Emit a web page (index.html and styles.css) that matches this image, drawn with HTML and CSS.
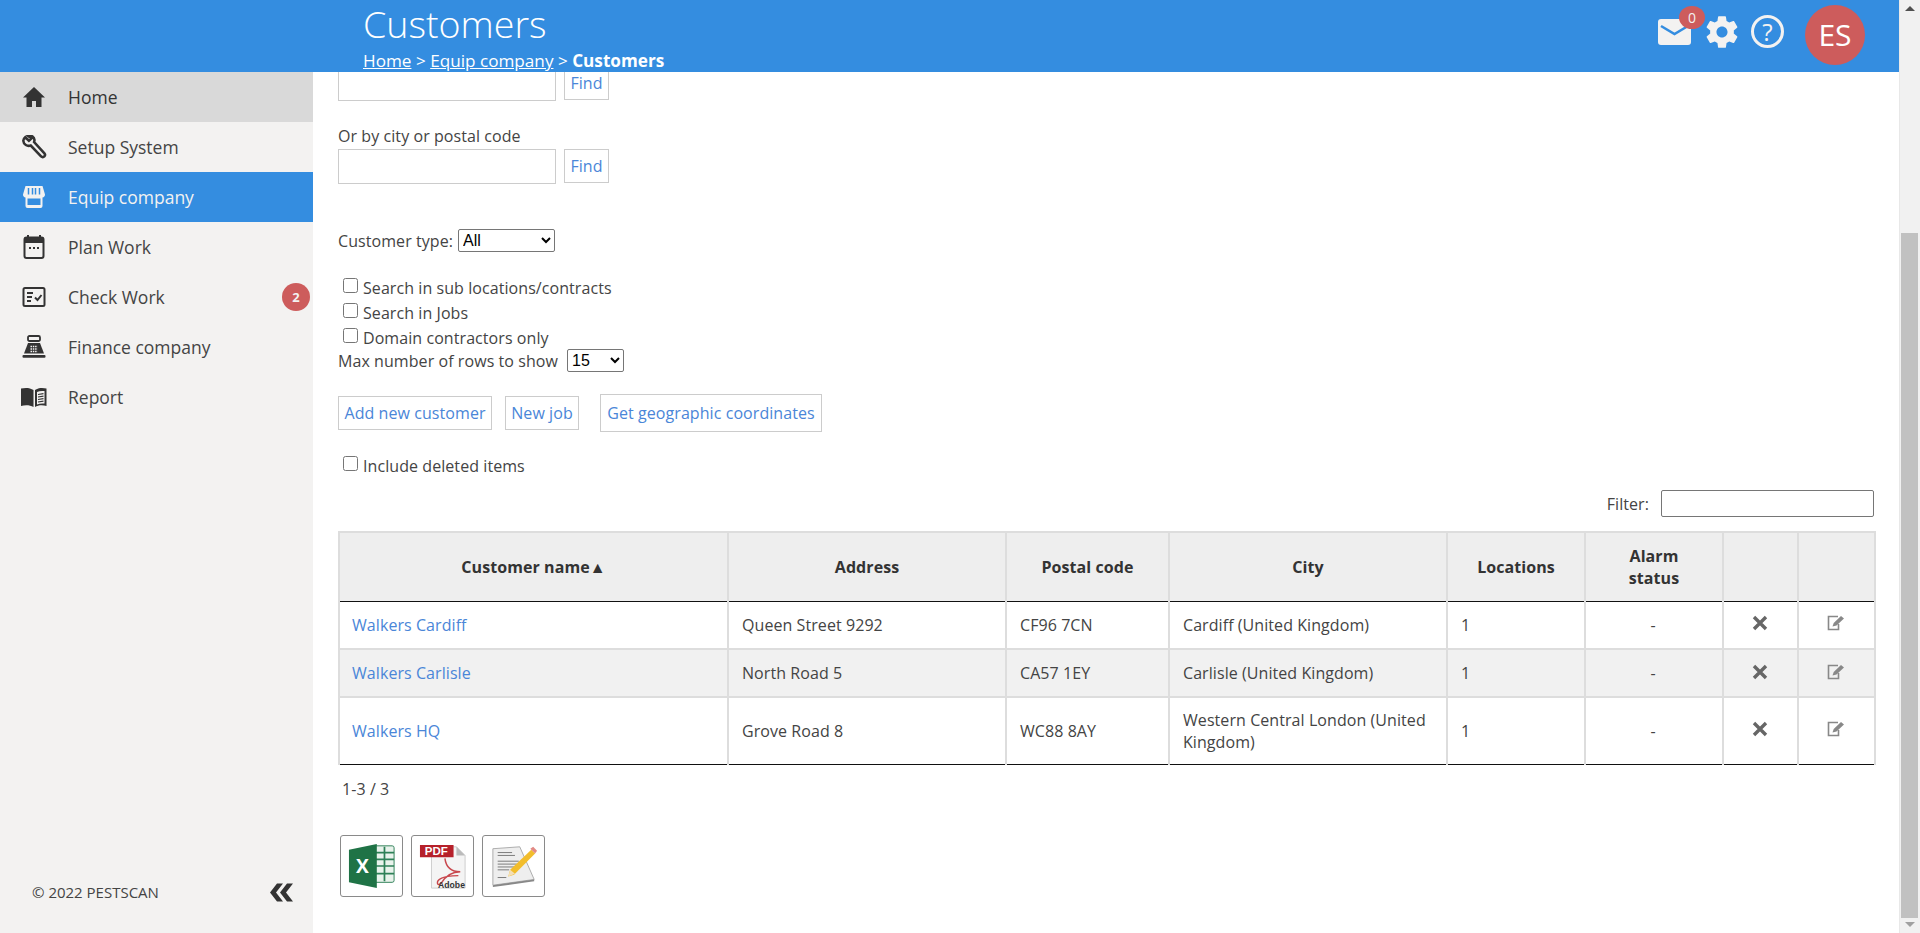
FILE: index.html
```html
<!DOCTYPE html>
<html lang="en">
<head>
<meta charset="utf-8">
<title>Customers</title>
<link rel="stylesheet" href="styles.css">
</head>
<body>
<div class="app">
  <header class="topbar">
    <div class="heading">
      <h1 class="title">Customers</h1>
      <div class="crumbs"><a href="#">Home</a> &gt; <a href="#">Equip company</a> &gt; <b>Customers</b></div>
    </div>
    <div class="tools">
      <span class="mail">
        <svg class="mail-icon" viewBox="0 0 33 26"><rect width="33" height="26" rx="3" fill="#f3f2f1"/><path d="M3 7l13.500 8L30 7" fill="none" stroke="#348de0" stroke-width="2.600"/></svg>
        <span class="mail-badge">0</span>
      </span>
      <svg class="gear" viewBox="0 0 24 24"><path fill="#f3f2f1" d="M19.430 12.980c.04-.32.07-.64.070-.98s-.030-.66-.070-.98l2.110-1.650c.19-.15.24-.42.120-.64l-2-3.460c-.12-.22-.39-.30-.61-.22l-2.490 1c-.52-.40-1.080-.73-1.690-.98l-.38-2.650C14.460 2.180 14.250 2 14 2h-4c-.25 0-.46.180-.49.420l-.38 2.650c-.61.250-1.170.590-1.690.98l-2.490-1c-.23-.09-.49 0-.61.220l-2 3.460c-.13.220-.07.490.12.640l2.110 1.650c-.04.320-.07.650-.07.980s.03.660.07.980l-2.110 1.650c-.19.150-.24.420-.12.640l2 3.460c.12.220.39.300.61.220l2.490-1c.52.400 1.080.730 1.690.980l.38 2.650c.03.240.24.420.49.420h4c.25 0 .46-.18.490-.42l.38-2.650c.61-.25 1.170-.59 1.690-.98l2.490 1c.23.090.49 0 .61-.22l2-3.460c.12-.22.07-.49-.12-.64l-2.110-1.650zM12 15.500c-1.930 0-3.500-1.570-3.500-3.500s1.570-3.500 3.500-3.500 3.500 1.570 3.500 3.500-1.570 3.500-3.500 3.500z"/></svg>
      <span class="help">?</span>
      <span class="avatar">ES</span>
    </div>
  </header>

  <div class="body">
    <aside class="sidebar">
      <nav class="menu">
        <a class="item item-hover" href="#">
          <svg class="ico" viewBox="0 0 24 24"><path d="M12 2L1 12.500h3.500V22h5.500v-6h4v6h5.500v-9.500H23z" fill="#333"/></svg>
          <span>Home</span>
        </a>
        <a class="item" href="#">
          <svg class="ico ico-wide" viewBox="0 0 26 26"><path d="M3.500 2.500l4 3.700 2.800-2.500-3.600-2.700c3.300-1.100 6.500.9 6.800 4.400 0 .9-.1 1.500-.4 2.200L24.300 20c.9 1 .8 2.200-.1 3.200-1 1-2.400 1.100-3.300.1L9.500 11.400C5.700 12.800 1.700 10.200 1.400 6.200c0-1.400.7-2.600 2.100-3.700z" fill="none" stroke="#333" stroke-width="2.800"/></svg>
          <span>Setup System</span>
        </a>
        <a class="item item-active" href="#">
          <svg class="ico" viewBox="0 0 24 24"><path d="M3.500 1h17l2.500 8.500c0 1.700-1 2.800-2.500 3V21a2 2 0 0 1-2 2h-13a2 2 0 0 1-2-2v-8.500C2 12.300 1 11.200 1 9.500z" fill="#f3f2f1"/><path d="M6.500 3v6.500M10.500 3v6.500M13.500 3v6.500M17.500 3v6.500" stroke="#348de0" stroke-width="1.500"/><rect x="5.500" y="13.500" width="13" height="6.500" fill="#348de0"/></svg>
          <span>Equip company</span>
        </a>
        <a class="item" href="#">
          <svg class="ico" viewBox="0 0 24 24"><path d="M6 0v3M18 0v3" stroke="#333" stroke-width="2"/><rect x="2.500" y="2.500" width="19" height="20.500" rx="2" fill="none" stroke="#333" stroke-width="2"/><rect x="2.500" y="2.500" width="19" height="5.500" fill="#333"/><path d="M7 13h2M11 13h2M15 13h2" stroke="#333" stroke-width="2"/></svg>
          <span>Plan Work</span>
        </a>
        <a class="item" href="#">
          <svg class="ico" viewBox="0 0 24 24"><rect x="1.500" y="3" width="21" height="18" rx="1.500" fill="none" stroke="#333" stroke-width="2"/><path d="M5 8h6M5 12h5M5 16h4" stroke="#333" stroke-width="2"/><path d="M13 12.500l2.500 2.500 4-5" fill="none" stroke="#333" stroke-width="2"/></svg>
          <span>Check Work</span>
          <span class="count">2</span>
        </a>
        <a class="item" href="#">
          <svg class="ico" viewBox="0 0 24 24"><rect x="6" y="1" width="12" height="5" rx="1.500" fill="none" stroke="#333" stroke-width="1.800"/><path d="M6 8h12l4 10.500H2z" fill="#333"/><rect x="0.500" y="20" width="23" height="2.800" rx="1" fill="#333"/><path d="M8.500 11.500h7M8.500 14h7M8.500 16.500h7" stroke="#f3f2f1" stroke-width="1.300" stroke-dasharray="1.500 .8"/></svg>
          <span>Finance company</span>
        </a>
        <a class="item" href="#">
          <svg class="ico ico-wide" viewBox="0 0 26 24"><path d="M0 3.500c4-1 9-1 12.500 1.500v17C9 20 4 20 0 21z" fill="#333"/><path d="M14 5c3-2.500 8-2.500 11.500-1.500v17.500c-3.500-1-8.500-1-11.500 1z" fill="#333"/><path d="M16 7c2-1 4.500-1.300 7.500-1v12.500c-3-.3-5.500 0-7.500 1z" fill="#f3f2f1"/><path d="M17 9.500l5.500-.8M17 12l5.500-.8M17 14.500l5.500-.8M17 17l5.500-.8" stroke="#333" stroke-width="1.200"/></svg>
          <span>Report</span>
        </a>
      </nav>
      <div class="side-foot">
        <span>© 2022 PESTSCAN</span>
        <svg class="collapse" viewBox="0 0 24 20"><path d="M8 1L1 10l7 9h6l-7-9 7-9zM18 1l-7 9 7 9h6l-7-9 7-9z" fill="#333"/></svg>
      </div>
    </aside>

    <main class="main">
      <div class="search-row search-clipped">
        <input class="text" type="text"><a class="btn btn-find" href="#">Find</a>
      </div>
      <label class="field-label">Or by city or postal code</label>
      <div class="search-row">
        <input class="text" type="text"><a class="btn btn-find" href="#">Find</a>
      </div>
      <div class="type-row">
        <span>Customer type:</span>
        <select class="sel sel-type"><option>All</option></select>
      </div>
      <div class="checks">
        <label class="check"><input type="checkbox"><span>Search in sub locations/contracts</span></label>
        <label class="check"><input type="checkbox"><span>Search in Jobs</span></label>
        <label class="check"><input type="checkbox"><span>Domain contractors only</span></label>
      </div>
      <div class="rows-row">
        <span>Max number of rows to show</span>
        <select class="sel sel-rows"><option>15</option></select>
      </div>
      <div class="actions">
        <a class="btn btn-add" href="#">Add new customer</a>
        <a class="btn btn-job" href="#">New job</a>
        <a class="btn btn-geo" href="#">Get geographic coordinates</a>
      </div>
      <label class="check check-deleted"><input type="checkbox"><span>Include deleted items</span></label>
      <div class="filter">
        <span>Filter:</span>
        <input class="filter-input" type="text">
      </div>
      <table class="grid">
        <colgroup>
          <col class="c1"><col class="c2"><col class="c3"><col class="c4"><col class="c5"><col class="c6"><col class="c7"><col class="c8">
        </colgroup>
        <thead>
          <tr>
            <th>Customer name▲</th>
            <th>Address</th>
            <th>Postal code</th>
            <th>City</th>
            <th>Locations</th>
            <th>Alarm<br>status</th>
            <th></th>
            <th></th>
          </tr>
        </thead>
        <tbody>
          <tr class="r-a">
            <td><a href="#">Walkers Cardiff</a></td>
            <td>Queen Street 9292</td>
            <td>CF96 7CN</td>
            <td>Cardiff (United Kingdom)</td>
            <td>1</td>
            <td class="mid">-</td>
            <td class="mid"><svg class="x" viewBox="0 0 16 16"><path d="M2 2l12 12M14 2L2 14" stroke="#666" stroke-width="3.400"/></svg></td>
            <td class="mid"><svg class="ed" viewBox="0 0 18 16"><path d="M11 1.500H1.500v13h10V9" fill="none" stroke="#888" stroke-width="1.600"/><path d="M5.500 11.500l1.200-3.500L14 1l3 2.500-7.500 7z" fill="#888"/></svg></td>
          </tr>
          <tr class="r-b">
            <td><a href="#">Walkers Carlisle</a></td>
            <td>North Road 5</td>
            <td>CA57 1EY</td>
            <td>Carlisle (United Kingdom)</td>
            <td>1</td>
            <td class="mid">-</td>
            <td class="mid"><svg class="x" viewBox="0 0 16 16"><path d="M2 2l12 12M14 2L2 14" stroke="#666" stroke-width="3.400"/></svg></td>
            <td class="mid"><svg class="ed" viewBox="0 0 18 16"><path d="M11 1.500H1.500v13h10V9" fill="none" stroke="#888" stroke-width="1.600"/><path d="M5.500 11.500l1.200-3.500L14 1l3 2.500-7.500 7z" fill="#888"/></svg></td>
          </tr>
          <tr class="r-c">
            <td><a href="#">Walkers HQ</a></td>
            <td>Grove Road 8</td>
            <td>WC88 8AY</td>
            <td>Western Central London (United Kingdom)</td>
            <td>1</td>
            <td class="mid">-</td>
            <td class="mid"><svg class="x" viewBox="0 0 16 16"><path d="M2 2l12 12M14 2L2 14" stroke="#666" stroke-width="3.400"/></svg></td>
            <td class="mid"><svg class="ed" viewBox="0 0 18 16"><path d="M11 1.500H1.500v13h10V9" fill="none" stroke="#888" stroke-width="1.600"/><path d="M5.500 11.500l1.200-3.500L14 1l3 2.500-7.500 7z" fill="#888"/></svg></td>
          </tr>
        </tbody>
      </table>
      <div class="pager">1-3 / 3</div>
      <div class="exports">
        <a class="export" href="#">
          <svg viewBox="0 0 50 48" class="export-ico">
            <path d="M28 3h18a2 2 0 0 1 2 2v34a2 2 0 0 1-2 2H28z" fill="#e9f3ec" stroke="#2e8057" stroke-width="1"/>
            <path d="M28 10h20M28 17h20M28 24h20M28 32h20M38 4v36" stroke="#2e8057" stroke-width="1.800"/>
            <path d="M1 7L30 1v46L1 41z" fill="#1f7346"/>
            <text x="15" y="31" class="xl-text">X</text>
          </svg>
        </a>
        <a class="export" href="#">
          <svg viewBox="0 0 50 50" class="export-ico">
            <path d="M13 5h26l9 9v34H13z" fill="#f4f4f4" stroke="#ccc"/>
            <path d="M39 5v9h9z" fill="#bbb"/>
            <path d="M1 3h35v13H1z" fill="#b6202a"/>
            <text x="18" y="14" class="pdf-text">PDF</text>
            <path d="M27 17c1 8 6 14 16 14-8 0-15 4-20 12-4 4-6-2 0-5 5-3 11-3 18-3" fill="none" stroke="#c8474d" stroke-width="1.500"/>
            <text x="48" y="48" class="adobe-text">Adobe</text>
          </svg>
        </a>
        <a class="export" href="#">
          <svg viewBox="0 0 50 48" class="export-ico">
            <path d="M3 6l28-2 15 34-43 6z" fill="#eee" stroke="#aaa"/>
            <path d="M3 44l43-6v2L3 46z" fill="#888"/>
            <path d="M8 10h15M8 13h18M8 19h22M8 22h20M8 25h18M8 28h12M8 36h9" stroke="#777" stroke-width="1"/>
            <path d="M19 35l2-7 22-21 4 4-22 22z" fill="#f2bd2c"/>
            <path d="M42 6l3-2 4 4-2 3z" fill="#e28a85"/>
            <path d="M19 35l2-7 5 4z" fill="#f3dfb8"/>
          </svg>
        </a>
      </div>
    </main>

    <div class="scrollbar">
      <span class="arrow-up"></span>
      <span class="thumb"></span>
      <span class="arrow-down"></span>
    </div>
  </div>
</div>
</body>
</html>
```
FILE: styles.css
```css
* { box-sizing: border-box; }
html, body { margin: 0; height: 100%; overflow: hidden; }
body { font-family: "Open Sans", sans-serif; font-size: 16px; letter-spacing: .07px; color: #444; background: #fff; }
a { color: #4a86d8; text-decoration: none; }

.app { display: flex; flex-direction: column; height: 933px; }

.topbar { flex: 0 0 72px; margin-right: 21px; background: #348de0; color: #f3f2f1; display: flex; justify-content: space-between; position: relative; z-index: 2; letter-spacing: 0; }
.heading { margin-left: 363px; }
.title { margin: 0; font-size: 37.6px; font-weight: 300; line-height: 48px; color: #fff; }
.crumbs { font-size: 17.15px; line-height: 22px; margin-top: 2px; color: #fff; }
.crumbs a { color: #fff; text-decoration: underline; }
.tools { display: flex; align-items: flex-start; }
.mail { position: relative; margin-top: 19px; width: 33px; height: 26px; }
.mail-icon { display: block; width: 33px; height: 26px; }
.mail-badge { position: absolute; left: 21px; top: -13px; width: 26px; height: 23px; border-radius: 50%; background: #cd5c5c; color: #f3f2f1; font-size: 14px; line-height: 23px; text-align: center; }
.gear { width: 38px; height: 38px; margin: 13px 0 0 12px; }
.help { width: 33px; height: 33px; margin: 15px 0 0 10px; border: 3px solid #f3f2f1; border-radius: 50%; color: #f3f2f1; font-size: 24px; line-height: 27px; text-align: center; font-weight: 400; }
.avatar { width: 60px; height: 60px; margin: 5px 34px 0 21px; border-radius: 50%; background: #cd5c5c; color: #fff; font-size: 30px; line-height: 60px; text-align: center; }

.body { flex: 1; display: flex; min-height: 0; }

.sidebar { flex: 0 0 313px; background: #f3f2f1; display: flex; flex-direction: column; justify-content: space-between; letter-spacing: 0; }
.item { height: 50px; display: flex; align-items: center; padding-left: 22px; color: #444; font-size: 17.5px; position: relative; }
.item-hover { background: #d9d9d9; color: #333; }
.item-active { background: #348de0; color: #f3f2f1; }
.ico { width: 24px; height: 24px; margin-right: 22px; flex: none; }
.ico-wide { width: 26px; margin-left: -1px; margin-right: 21px; }
.count { position: absolute; left: 282px; top: 11px; width: 28px; height: 28px; border-radius: 50%; background: #cd5c5c; color: #f3f2f1; font-size: 13px; font-weight: 700; line-height: 28px; text-align: center; }
.side-foot { height: 42px; margin-bottom: 20px; display: flex; align-items: center; justify-content: space-between; padding: 0 20px 0 32px; font-size: 15px; }
.collapse { width: 24px; height: 21px; }

.main { flex: 1; min-width: 0; padding: 0 46px 0 25px; overflow: hidden; }
.search-row { display: flex; align-items: flex-start; gap: 8px; height: 35px; }
.search-clipped { margin-top: -6px; }
.text { width: 218px; height: 35px; border: 1px solid #ccc; background: #fff; }
.btn { display: inline-flex; align-items: center; justify-content: center; border: 1px solid #ccc; background: #fff; color: #4a86d8; font-size: 16px; }
.btn-find { width: 45px; height: 34px; }
.field-label { display: block; margin-top: 23px; line-height: 25px; height: 25px; }

.type-row { display: flex; align-items: center; gap: 5px; height: 23px; margin-top: 45px; }
.sel { height: 23px; border: 1px solid #767676; border-radius: 2px; background: #fff; color: #000; font-family: "Liberation Sans", sans-serif; font-size: 16px; }
.sel-type { width: 97px; }
.sel-rows { width: 57px; }

.checks { margin-top: 23px; }
.check { display: flex; align-items: center; height: 25px; padding-left: 5px; }
.check input { width: 15px; height: 15px; margin: 0 5px 0 0; position: relative; top: -2px; }
.rows-row { display: flex; align-items: center; gap: 9px; height: 23px; margin-top: -1px; }

.actions { display: flex; align-items: center; margin-top: 22px; height: 38px; }
.btn-add { width: 154px; height: 34px; }
.btn-job { width: 74px; height: 34px; margin-left: 13px; }
.btn-geo { width: 222px; height: 38px; margin-left: 21px; }
.check-deleted { margin-top: 21px; }

.filter { display: flex; justify-content: flex-end; align-items: center; gap: 12px; height: 27px; margin-top: 12px; }
.filter-input { width: 213px; height: 27px; border: 1px solid #767676; border-radius: 2px; background: #fff; }

.grid { width: 1536px; table-layout: fixed; border-collapse: collapse; margin-top: 14px; }
.c1 { width: 389px; } .c2 { width: 278px; } .c3 { width: 163px; } .c4 { width: 278px; }
.c5 { width: 138px; } .c6 { width: 138px; } .c7 { width: 75px; } .c8 { width: 77px; }
.grid th { height: 69px; background: #eee; border: 2px solid #ddd; border-bottom: 1px solid #111; font-weight: 700; color: #333; line-height: 22px; padding: 0 12px; text-align: center; }
.grid td { border: 2px solid #ddd; padding: 0 12px 0 13px; line-height: 22px; }
.grid td:first-child { padding-left: 12px; }
.r-a td { height: 48px; border-top: 0; }
.r-b td { height: 48px; background: #f1f1f1; }
.r-c td { height: 67px; border-bottom: 1px solid #111; }
.grid .mid { text-align: center; padding: 0 13px 0 11px; }
.x { display: block; width: 16px; height: 16px; margin: -3px auto 0; }
.ed { display: block; width: 18px; height: 16px; margin: -3px auto 0; }

.pager { margin: 13px 0 0 4px; line-height: 22px; }
.exports { display: flex; margin: 35px 0 0 2px; }
.export { width: 63px; height: 62px; margin-right: 8px; border: 1px solid #8a8a8a; border-radius: 3px; background: #fff; display: flex; align-items: center; justify-content: center; }
.export-ico { width: 48px; height: 48px; }
.xl-text { font-family: "Open Sans", sans-serif; font-weight: 700; font-size: 20px; fill: #fff; text-anchor: middle; }
.pdf-text { font-family: "Liberation Sans", sans-serif; font-weight: 700; font-size: 12px; fill: #fff; text-anchor: middle; }
.adobe-text { font-family: "Liberation Sans", sans-serif; font-weight: 700; font-size: 9px; fill: #333; text-anchor: end; }

.scrollbar { position: fixed; right: 0; top: 0; bottom: 0; width: 21px; background: #f1f1f1; border-left: 1px solid #e8e8e8; z-index: 3; }
.arrow-up { position: absolute; left: 5px; top: 6px; border: 5px solid transparent; border-top: 0; border-bottom-color: #505050; }
.arrow-down { position: absolute; left: 5px; bottom: 6px; border: 5px solid transparent; border-bottom: 0; border-top-color: #a0a0a0; }
.thumb { position: absolute; left: 1px; right: 2px; top: 233px; height: 685px; background: #c1c1c1; }
```
